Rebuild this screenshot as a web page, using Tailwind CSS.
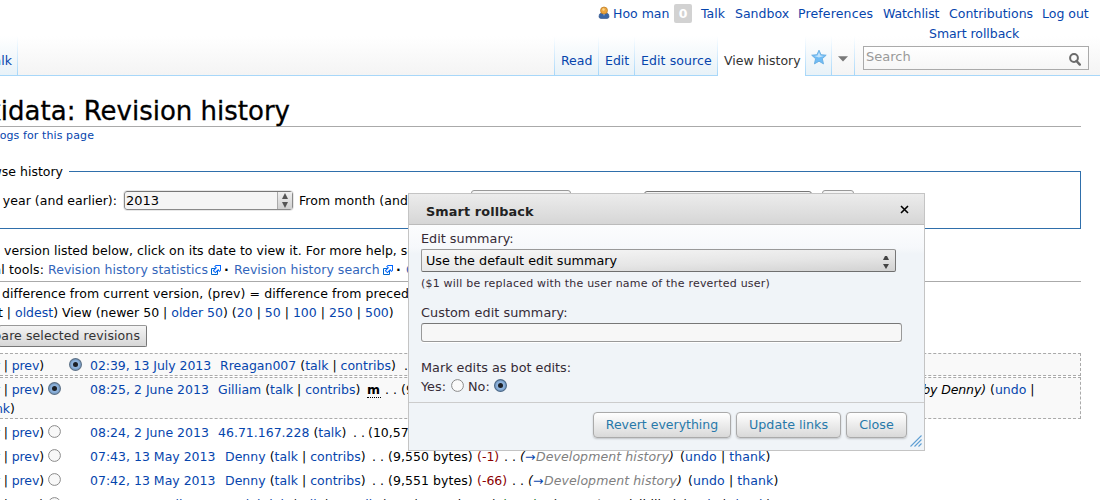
<!DOCTYPE html>
<html lang="en">
<head>
<meta charset="utf-8">
<title>Revision history</title>
<script src="https://cdn.jsdelivr.net/npm/@tailwindcss/browser@4"></script>
</head>
<body class="bg-white">
<div class="relative w-[1100px] h-[500px] overflow-hidden bg-white text-black text-[12.5px] leading-[19px] whitespace-nowrap [font-family:'DejaVu_Sans',sans-serif]">

<!-- header -->
<header class="flex flex-col h-[76px] border-b border-[#a7d7f9] bg-[linear-gradient(to_bottom,#fff_36px,#f4f4f4_75px)]">
<nav class="flex h-6 pt-1 text-[#0645ad]"><svg class="ml-[598px] mt-[2px] w-3 h-[14px] shrink-0" viewBox="0 0 12 14"><path d="M1 10.500Q1 7.500 3 7h6q2 .500 2 3.500Q11 12.500 9 12.500H3Q1 12.500 1 10.500z" fill="#3a66a4" stroke="#2c4f86" stroke-width=".6"/><path d="M4.500 7 6 10l1.500-3z" fill="#8facd4"/><circle cx="6" cy="4.500" r="3.500" fill="#eda53c" stroke="#b97a22" stroke-width=".7"/><circle cx="5.500" cy="3.500" r="1.200" fill="#fbd58c"/></svg><span class="ml-[3px] w-[61px]">Hoo man</span><span class="w-[18px] h-[19px] mr-[9px] rounded-[2px] bg-[#d2d2d2] text-white font-bold text-center">0</span><span class="w-[34px]">Talk</span><span class="w-[63px]">Sandbox</span><span class="w-[85px] tracking-[.15px]">Preferences</span><span class="w-[66px] tracking-[-.1px]">Watchlist</span><span class="w-[93px]">Contributions</span><span>Log out</span></nav>
<div class="flex h-[51px]">
<div class="flex items-end w-[554px]">
<div class="flex justify-end w-[17px] h-[39px] pr-[5px] pt-[15px] overflow-hidden text-[#0645ad] bg-linear-to-b from-white to-[#e8f2f8]">Talk</div>
<i class="w-px h-[39px] bg-linear-to-b from-white to-[#a7d7f9]"></i>
</div>
<div class="flex items-end w-[309px] text-[#0645ad]">
<i class="w-px h-[39px] bg-linear-to-b from-white to-[#a7d7f9]"></i>
<span class="w-[43px] h-[39px] pl-[6px] pt-[15px] bg-linear-to-b from-white to-[#e8f2f8]">Read</span>
<i class="w-px h-[39px] bg-linear-to-b from-white to-[#a7d7f9]"></i>
<span class="w-[35px] h-[39px] pl-[6px] pt-[15px] bg-linear-to-b from-white to-[#e8f2f8]">Edit</span>
<i class="w-px h-[39px] bg-linear-to-b from-white to-[#a7d7f9]"></i>
<span class="w-[82px] h-[39px] pl-[6px] pt-[15px] tracking-[.1px] bg-linear-to-b from-white to-[#e8f2f8]">Edit source</span>
<i class="w-px h-[39px] bg-linear-to-b from-white to-[#a7d7f9]"></i>
<span class="w-[87px] h-[40px] -mb-px pl-[6px] pt-[15px] text-[#333] bg-white">View history</span>
<i class="w-px h-[39px] bg-linear-to-b from-white to-[#a7d7f9]"></i>
<span class="w-[25px] h-[39px] pl-[5px] pt-[13px] bg-linear-to-b from-white to-[#e8f2f8]"><svg class="w-4 h-4" viewBox="0 0 16 16"><path d="M8 1.200l2 4.500 5.200.5-3.900 3.500 1.200 5.200L8 12.200l-4.600 2.700 1.200-5.200L.7 6.200l5.200-.5z" fill="#6fbcf5" stroke="#68aee2" stroke-width=".9"/><path d="M8 3l1.400 3.500 3.500.5-5 1.500-4.800-1.500 3.400-.5z" fill="#c3e4fc"/></svg></span>
<i class="w-px h-[39px] bg-linear-to-b from-white to-[#a7d7f9]"></i>
<span class="w-[22px] h-[39px] pl-[6px] pt-[20px]"><svg class="w-[10px] h-[6px]" viewBox="0 0 10 6"><path d="M0 .3h10L5 5.500z" fill="#797979"/></svg></span>
<i class="w-px h-[39px] bg-linear-to-b from-white to-[#a7d7f9]"></i>
</div>
<div class="w-[226px] text-[#0645ad]">
<div class="h-[22px] pl-[66px] tracking-[-.05px]">Smart rollback</div>
<div class="flex justify-between h-6 border border-[#aaa] pl-[2px] pr-[7px] bg-linear-to-b from-white to-[#f6f6f6] text-[#999] text-[13px]"><span>Search</span><svg class="w-3 h-[13px] mt-[6px]" viewBox="0 0 12 13"><circle cx="5" cy="5" r="3.900" fill="none" stroke="#6b6b6b" stroke-width="2"/><path d="M7.500 8l3.300 3.600" stroke="#6b6b6b" stroke-width="2.400" stroke-linecap="round"/></svg></div>
</div>
</div>
</header>

<!-- page content -->
<main class="w-[1081px]">
<div class="h-[51px] pt-[20px] border-b border-[#aaa]"><h1 class="flex justify-end w-[290px] text-[26px] leading-[30px] [-webkit-text-stroke:.3px_black]">Wikidata: Revision history</h1></div>
<div class="flex justify-end w-[94px] h-4 mt-px text-[11px] leading-4 tracking-[.1px] text-[#0645ad]">View logs for this page</div>

<div class="flex items-center h-px mt-[27px]"><span class="flex justify-end w-[69px] pr-[6px]">Browse history</span><i class="flex-1 h-px bg-[#2f6fab]"></i></div>
<div class="flex h-[57px] pt-[19px] border-r border-b border-[#2f6fab]">
<span class="flex justify-end w-[117px] mr-[7px] tracking-[.03px]">From year (and earlier):</span>
<span class="flex justify-between w-[169px] h-[19px] border border-[#8a8a8a] border-t-[#777] rounded-[3px] bg-[#f5f5f5] pl-[1px] outline outline-[#e8e8e8]"><span class="text-[13px] leading-[18px]">2013</span><span class="flex flex-col items-center justify-center gap-[3px] w-[15px] border-l border-[#aaa] bg-linear-to-b from-[#f0f0f0] to-[#d0d0d0]"><svg class="w-[6px] h-[6px]" viewBox="0 0 6 6"><path d="M3 0l3 6H0z" fill="#555"/></svg><svg class="w-[6px] h-[6px]" viewBox="0 0 6 6"><path d="M3 6L0 0h6z" fill="#555"/></svg></span></span>
<span class="ml-[6px] w-[172px] tracking-[.08px]">From month (and earlier):</span>
<span class="w-[100px] h-[21px] -mt-px border border-[#999] rounded-[3px] bg-[#f4f4f4] mr-[73px]"></span>
<span class="w-[168px] h-[19px] border border-[#777] rounded-[3px] bg-[#f4f4f4] mr-[10px]"></span>
<span class="w-8 h-[21px] -mt-px border border-[#999] rounded-[3px] bg-[#f4f4f4]"></span>
</div>

<div class="mt-3 h-[41px] border-b border-[#aaa]">
<div class="flex"><span class="w-[4px] flex justify-end">For any&nbsp;</span><span class="tracking-[.02px]">version listed below, click on its date to view it. For more help, see</span></div>
<div class="flex"><span class="flex justify-end w-[44px] mr-1 tracking-[.1px]">External tools:</span><span class="w-[162px] tracking-[.04px] text-[#3366bb]">Revision history statistics</span><svg class="w-3 h-3 mt-1" viewBox="0 0 12 12"><path d="M1.500 4.518h5.982V10.500H1.500z" fill="#fff" stroke="#06c"/><path d="M5.765 1H11v5.390L9.427 7.937l-1.310-1.310L5.393 9.350l-2.690-2.688 2.810-2.808L4.200 2.544z" fill="#06f"/><path d="M9.995 2.004l.022 4.885L8.200 5.070 5.320 7.950 4.090 6.723l2.882-2.880-1.850-1.852z" fill="#fff"/></svg><b class="w-3 pl-[2px]">·</b><span class="w-[148px] tracking-[.04px] text-[#3366bb]">Revision history search</span><svg class="w-3 h-3 mt-1" viewBox="0 0 12 12"><path d="M1.500 4.518h5.982V10.500H1.500z" fill="#fff" stroke="#06c"/><path d="M5.765 1H11v5.390L9.427 7.937l-1.310-1.310L5.393 9.350l-2.690-2.688 2.810-2.808L4.200 2.544z" fill="#06f"/><path d="M9.995 2.004l.022 4.885L8.200 5.070 5.320 7.950 4.090 6.723l2.882-2.880-1.850-1.852z" fill="#fff"/></svg><b class="w-3 pl-[2px]">·</b><span class="text-[#3366bb]">Contributors</span></div>
</div>

<div class="flex mt-[2px]"><span class="w-[2px] flex justify-end">(cur) =&nbsp;</span><span class="tracking-[.08px]">difference from current version, (prev) = difference from preceding</span></div>
<div class="flex"><span class="w-[15px] flex justify-end">(latest |&nbsp;</span><span><a class="text-[#0645ad]">oldest</a>) View (newer 50 | <a class="text-[#0645ad]">older 50</a>) (<a class="text-[#0645ad]">20</a> | <a class="text-[#0645ad]">50</a> | <a class="text-[#0645ad]">100</a> | <a class="text-[#0645ad]">250</a> | <a class="text-[#0645ad]">500</a>)</span></div>
<div class="flex justify-end w-[148px] h-[22px] mt-[3px] -ml-px pr-[6px] border border-[#999] border-b-[#777] border-r-[#777] rounded-[2px] bg-linear-to-b from-[#f4f4f4] to-[#d6d6d6] text-[#333] tracking-[.1px] leading-[20px]">Compare selected revisions</div>

<!-- revisions -->
<div class="flex h-[23px] mt-[6px] pt-[2px] border border-l-0 border-dashed border-[#aaa] bg-[#f9f9f9]"><span class="flex justify-end w-[44px] mr-[25px] tracking-[-.1px]"><span>(cur | <a class="text-[#0645ad]">prev</a>)</span></span><svg class="w-[13px] h-[13px] mt-[2px] mr-[8px]" viewBox="0 0 13 13"><circle cx="6.500" cy="6.500" r="5.900" fill="#7fa5d0" stroke="#5f7388" stroke-width="1.200"/><circle cx="6.500" cy="6.500" r="4" fill="#8fb3dc"/><circle cx="6.500" cy="6.500" r="2.500" fill="#1c2026"/></svg><a class="w-[130px] text-[#0645ad] tracking-[-.05px]">02:39, 13 July 2013</a><span class="w-[184px]"><a class="text-[#0645ad]">Rreagan007</a> (<a class="text-[#0645ad]">talk</a> | <a class="text-[#0645ad]">contribs</a>)</span><span>. .</span></div>
<div class="h-[42px] mt-px pt-[2px] border border-l-0 border-dashed border-[#aaa] bg-[#f9f9f9]">
<div class="flex"><span class="flex justify-end w-[44px] mr-[4px] tracking-[-.1px]"><span>(cur | <a class="text-[#0645ad]">prev</a>)</span></span><svg class="w-[13px] h-[13px] mt-[2px] mr-[29px]" viewBox="0 0 13 13"><circle cx="6.500" cy="6.500" r="5.900" fill="#7fa5d0" stroke="#5f7388" stroke-width="1.200"/><circle cx="6.500" cy="6.500" r="4" fill="#8fb3dc"/><circle cx="6.500" cy="6.500" r="2.500" fill="#1c2026"/></svg><a class="w-[128px] text-[#0645ad]">08:25, 2 June 2013</a><span class="w-[149px] tracking-[-.03px]"><a class="text-[#0645ad]">Gilliam</a> (<a class="text-[#0645ad]">talk</a> | <a class="text-[#0645ad]">contribs</a>)</span><b class="w-[14px] h-[18px] mr-[4px] border-b border-dotted border-black">m</b><span class="w-[16px]">. .</span><span class="w-[589px] flex justify-between"><span>(9,617 bytes)</span><i class="tracking-[-.1px] mr-[4px]">(Reverted edits by Denny)</i></span><span>(<a class="text-[#0645ad]">undo</a> |</span></div>
<div class="flex justify-end w-[15px]"><span><a class="text-[#0645ad]">thank</a>)</span></div>
</div>
<div class="flex h-6 mt-[4px]"><span class="flex justify-end w-[44px] mr-[4px] tracking-[-.1px]"><span>(cur | <a class="text-[#0645ad]">prev</a>)</span></span><svg class="w-[13px] h-[13px] mt-[2px] mr-[29px]" viewBox="0 0 13 13"><circle cx="6.500" cy="6.500" r="5.900" fill="#f8f8f8" stroke="#8a8a8a"/></svg><a class="w-[128px] text-[#0645ad]">08:24, 2 June 2013</a><span class="w-[135px]"><a class="text-[#0645ad]">46.71.167.228</a> (<a class="text-[#0645ad]">talk</a>)</span><span class="w-[15px]">. .</span><span>(10,575 bytes)</span></div>
<div class="flex h-6"><span class="flex justify-end w-[44px] mr-[4px] tracking-[-.1px]"><span>(cur | <a class="text-[#0645ad]">prev</a>)</span></span><svg class="w-[13px] h-[13px] mt-[2px] mr-[29px]" viewBox="0 0 13 13"><circle cx="6.500" cy="6.500" r="5.900" fill="#f8f8f8" stroke="#8a8a8a"/></svg><a class="w-[135px] text-[#0645ad]">07:43, 13 May 2013</a><span class="w-[147px] tracking-[.02px]"><a class="text-[#0645ad]">Denny</a> (<a class="text-[#0645ad]">talk</a> | <a class="text-[#0645ad]">contribs</a>)</span><span class="w-[16px]">. .</span><span class="w-[89px] tracking-[.06px]">(9,550 bytes)</span><span class="w-[27px] text-[#8b0000]">(-1)</span><span class="w-[16px]">. .</span><i class="w-[5px]">(</i><a class="w-[11px] text-[#0645ad]">→</a><i class="w-[144px] tracking-[.1px]"><span class="text-[#808080]">Development history</span>)</i><span class="tracking-[.1px]">(<a class="text-[#0645ad]">undo</a> | <a class="text-[#0645ad]">thank</a>)</span></div>
<div class="flex h-6"><span class="flex justify-end w-[44px] mr-[4px] tracking-[-.1px]"><span>(cur | <a class="text-[#0645ad]">prev</a>)</span></span><svg class="w-[13px] h-[13px] mt-[2px] mr-[29px]" viewBox="0 0 13 13"><circle cx="6.500" cy="6.500" r="5.900" fill="#f8f8f8" stroke="#8a8a8a"/></svg><a class="w-[135px] text-[#0645ad]">07:42, 13 May 2013</a><span class="w-[147px] tracking-[.02px]"><a class="text-[#0645ad]">Denny</a> (<a class="text-[#0645ad]">talk</a> | <a class="text-[#0645ad]">contribs</a>)</span><span class="w-[16px]">. .</span><span class="w-[89px] tracking-[.06px]">(9,551 bytes)</span><span class="w-[35px] text-[#8b0000]">(-66)</span><span class="w-[16px]">. .</span><i class="w-[5px]">(</i><a class="w-[11px] text-[#0645ad]">→</a><i class="w-[144px] tracking-[.1px]"><span class="text-[#808080]">Development history</span>)</i><span class="tracking-[.1px]">(<a class="text-[#0645ad]">undo</a> | <a class="text-[#0645ad]">thank</a>)</span></div>
<div class="flex h-6"><span class="flex justify-end w-[44px] mr-[4px] tracking-[-.1px]"><span>(cur | <a class="text-[#0645ad]">prev</a>)</span></span><svg class="w-[13px] h-[13px] mt-[2px] mr-[29px]" viewBox="0 0 13 13"><circle cx="6.500" cy="6.500" r="5.900" fill="#f8f8f8" stroke="#8a8a8a"/></svg><a class="w-[126px] text-[#0645ad]">07:37, 17 April 2013</a><span class="flex justify-end w-[172px] mr-[6px]"><span><a class="text-[#0645ad]">Quedahdab</a> (<a class="text-[#0645ad]">talk</a> | <a class="text-[#0645ad]">contribs</a>)</span></span><span class="w-[19px]">. .</span><span class="w-[89px]">(9,617 bytes)</span><span class="w-[33px] text-[#006400]">(+15)</span><span class="w-[16px]">. .</span><i class="w-[5px]">(</i><a class="w-[11px] text-[#0645ad]">→</a><i class="w-[115px]"><span class="text-[#808080]">Header</span>: visibility)</i><span>(<a class="text-[#0645ad]">undo</a> | <a class="text-[#0645ad]">thank</a>)</span></div>
</main>

<!-- dialog -->
<section class="absolute left-[408px] top-[193px] w-[517px] h-[258px] border border-[#c4c4c4] bg-[linear-gradient(to_bottom,#fcfdfe_31px,#f6f8fb_54px,#f0f4f8_60px)] text-[#362b36] text-[12.8px]">
<div class="flex h-[31px] pt-[8px] pl-[17px] pr-[15px] justify-between border-b border-[#bbb] bg-linear-to-b from-[#ececec] to-[#d6d6d6]"><b class="text-[#222] tracking-[.12px]">Smart rollback</b><svg class="w-[9px] h-[9px] mt-[3px]" viewBox="0 0 9 9"><path d="M1 1l7 7M8 1L1 8" stroke="#000" stroke-width="1.600"/></svg></div>
<div class="pt-1 pl-3">
<div>Edit summary:</div>
<div class="flex justify-between w-[475px] h-[23px] mt-px pl-1 pr-[6px] border border-[#999] border-b-[#6f6f6f] border-r-[#777] rounded-[2px] bg-[linear-gradient(178deg,#f8f8f8,#e6e6e6_60%,#d2d2d2)] text-black leading-[21px]"><span>Use the default edit summary</span><span class="flex flex-col justify-center gap-[4px] pt-[3px]"><svg class="w-[6px] h-[4px]" viewBox="0 0 6 4"><path d="M2 0h2l2 4H0z" fill="#444"/></svg><svg class="w-[6px] h-[5px]" viewBox="0 0 6 5"><path d="M3 5L0 0h6z" fill="#444"/></svg></span></div>
<div class="mt-[4px] text-[11px] tracking-[.2px] leading-4">($1 will be replaced with the user name of the reverted user)</div>
<div class="mt-[11px] tracking-[.06px]">Custom edit summary:</div>
<div class="w-[481px] h-[19px] mt-px border border-[#999] border-t-[#777] rounded-[3px] bg-[#f7f7f7] shadow-[0_1px_0_#fff]"></div>
<div class="mt-4">Mark edits as bot edits:</div>
<div class="flex"><span class="w-[30px]">Yes:</span><svg class="w-[13px] h-[13px] mt-[2px] mr-[4px]" viewBox="0 0 13 13"><circle cx="6.500" cy="6.500" r="5.900" fill="#fafafa" stroke="#8a8a8a"/></svg><span class="w-[26px]">No:</span><svg class="w-[13px] h-[13px] mt-[2px]" viewBox="0 0 13 13"><circle cx="6.500" cy="6.500" r="5.900" fill="#7fa5d0" stroke="#4d6987" stroke-width="1.200"/><circle cx="6.500" cy="6.500" r="4" fill="#8fb3dc"/><circle cx="6.500" cy="6.500" r="2.500" fill="#1c2026"/></svg></div>
</div>
<div class="flex justify-end gap-[5px] mt-[6px] pt-[9px] pr-[2px] border-t border-[#ccc] text-[#2779aa] leading-[24px] text-center">
<button class="w-[138px] h-[26px] border border-[#aaa] rounded-[4px] bg-linear-to-b from-white to-[#d9d9d9] shadow-[0_1px_2px_rgba(0,0,0,.2)] text-[12.5px]">Revert everything</button>
<button class="w-[105px] h-[26px] border border-[#aaa] rounded-[4px] bg-linear-to-b from-white to-[#d9d9d9] shadow-[0_1px_2px_rgba(0,0,0,.2)] text-[12.7px]">Update links</button>
<button class="w-[61px] h-[26px] border border-[#aaa] rounded-[4px] bg-linear-to-b from-white to-[#d9d9d9] shadow-[0_1px_2px_rgba(0,0,0,.2)] text-[12.7px]">Close</button>
<svg class="w-[12px] h-[12px] mt-[23px] -ml-[2px]" viewBox="0 0 12 12"><path d="M.5 11.500l11-11M4.500 11.500l7-7M8.500 11.500l3-3" stroke="#5f9fd4" stroke-width="1.100"/></svg>
</div>
</section>
</div>
</body>
</html>
